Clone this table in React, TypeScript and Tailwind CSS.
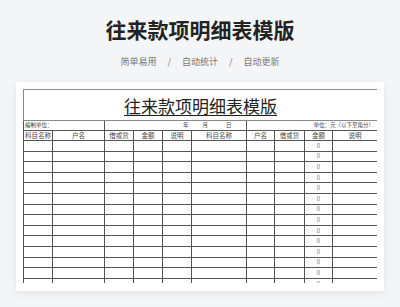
const cols = ['w-[29px]', 'w-[52px]', 'w-[29px]', 'w-[29px]', 'w-[29px]', 'w-[55px]', 'w-[28px]', 'w-[30px]', 'w-[28px]', 'w-[45px]'];
const heads = ['科目名称', '户名', '借或贷', '金额', '说明', '科目名称', '户名', '借或贷', '金额', '说明'];
const rows = Array.from({ length: 14 }, (_, i) => i);

function Sheet() {
  return (
    <div className="h-[194px] overflow-hidden">
      <table className="w-[354px] table-fixed border-collapse text-[#444]">
        <colgroup>
          {cols.map((c, i) => (
            <col key={i} className={c} />
          ))}
        </colgroup>
        <tbody>
          <tr className="h-[31px]">
            <td colSpan={10} className="border border-[#8a8a8a] p-0 pt-[4px] align-top text-center">
              <span className="text-[17px] leading-[20px] text-[#222] underline underline-offset-[2px] decoration-1">
                往来款项明细表模版
              </span>
            </td>
          </tr>
          <tr className="h-[10px]">
            <td colSpan={2} className="border border-[#555] p-0 pl-[1px] text-[5.5px] leading-none">编制单位：</td>
            <td colSpan={4} className="border border-[#555] p-0 text-[5.5px] leading-none">
              <div className="flex pl-[78px]">
                <span>年</span>
                <span className="ml-[14px]">月</span>
                <span className="ml-[18px]">日</span>
              </div>
            </td>
            <td colSpan={4} className="border border-[#555] p-0 pr-[3px] text-right text-[5.5px] leading-none">
              单位：元（以下至角分）
            </td>
          </tr>
          <tr className="h-[10px]">
            {heads.map((h, i) => (
              <td key={i} className="border border-[#555] p-0 text-center text-[6.5px] leading-none whitespace-nowrap overflow-hidden">
                {h}
              </td>
            ))}
          </tr>
          {rows.map((r) => (
            <tr key={r} className="h-[10.6px]">
              {cols.map((_, i) => (
                <td key={i} className="border border-[#555] p-0 text-center text-[6px] leading-none text-[#777]">
                  {i === 8 ? '0' : ''}
                </td>
              ))}
            </tr>
          ))}
        </tbody>
      </table>
    </div>
  );
}

export default function App() {
  return (
    <div className="h-[307px] w-[400px] overflow-hidden bg-[#f4f5f7] pt-[18px] font-['Noto_Sans_CJK_SC',sans-serif]">
      <h1 className="text-center text-[21px] leading-[22px] font-bold text-[#222]">往来款项明细表模版</h1>
      <div className="mt-[16px] flex justify-center items-center gap-[11px] text-[9px] leading-[12px] text-[#777]">
        <span>简单易用</span>
        <span>/</span>
        <span>自动统计</span>
        <span>/</span>
        <span>自动更新</span>
      </div>
      <div className="mx-[16px] mt-[14px] h-[209px] bg-white p-[7px] pl-[7px] shadow-[0_2px_8px_rgba(0,0,0,0.08)]">
        <Sheet />
      </div>
    </div>
  );
}
